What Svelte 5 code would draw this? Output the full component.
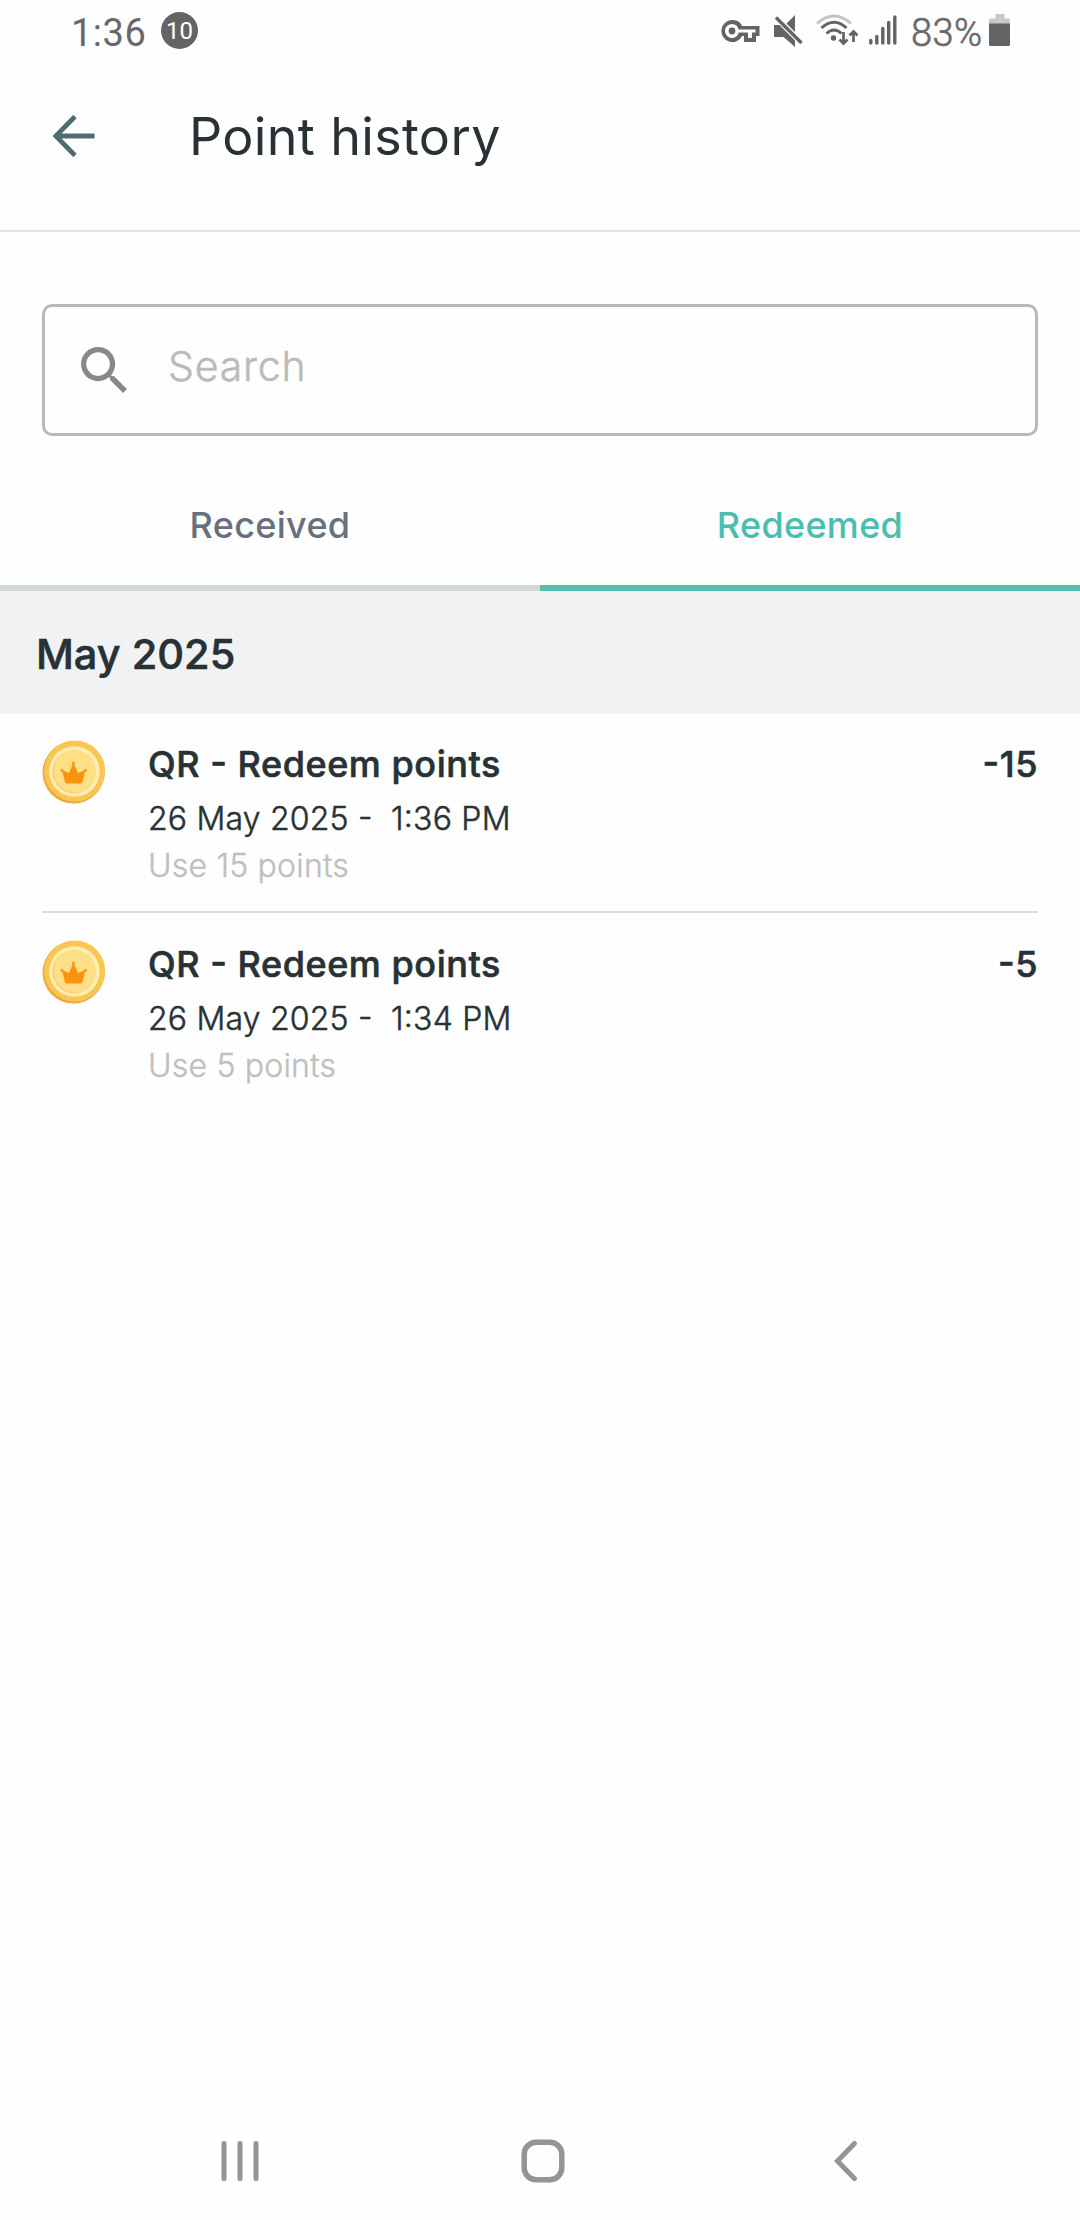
<script>
  const tabs = ['Received', 'Redeemed'];
  let active = $state('Redeemed');
  const entries = [
    { title: 'QR - Redeem points', date: '26 May 2025 -  1:36 PM', note: 'Use 15 points', amount: '-15' },
    { title: 'QR - Redeem points', date: '26 May 2025 -  1:34 PM', note: 'Use 5 points', amount: '-5' }
  ];
</script>

{#snippet coin()}
  <svg class="coin" viewBox="0 0 64 64" aria-hidden="true">
    <circle cx="31.5" cy="32.5" r="31" fill="#e9ab40" />
    <circle cx="32.7" cy="31" r="30.5" fill="#f9c653" />
    <circle cx="32.500" cy="31.500" r="25.3" fill="#ffedae" />
    <circle cx="32" cy="31.800" r="21.5" fill="#f3cf78" />
    <circle cx="33" cy="31.300" r="21" fill="#fedf86" />
    <path d="M20 30l7 3L31.500 22.500 36 33l7.500-3-3 12q-.3 1.500-2 1.500H25q-1.700 0-2-1.500z" fill="#f9920f" />
    <circle cx="20" cy="30.500" r="1.400" fill="#f9920f" />
    <circle cx="43.500" cy="30.500" r="1.400" fill="#f9920f" />
    <circle cx="31.500" cy="23" r="1.500" fill="#f9920f" />
  </svg>
{/snippet}

<div class="screen">
  <div class="status">
    <div class="left">
      <span class="clock">1:36</span>
      <span class="badge">10</span>
    </div>
    <div class="right">
      <svg class="key" width="39" height="24" viewBox="0 0 39 24">
        <path fill="#646464" fill-rule="evenodd" d="M11 0a11 11 0 0 1 10.200 6H38.500v10H35v6H23v-6h-1.800A11 11 0 1 1 11 0zM11 4a7 7 0 1 0 6.800 8.500H27V18h4v-5.500h3.500V9.500H17.600A7 7 0 0 0 11 4z" />
        <circle cx="11" cy="11" r="3.400" fill="#646464" />
      </svg>
      <svg class="mute" width="30" height="32" viewBox="0 0 30 32">
        <path fill="#646464" d="M0 10h5.500L21 25.500V32L9.500 22H0zM21 0v17L12.500 8.500z" />
        <path d="M2 2.500L27.500 28" stroke="#646464" stroke-width="3.400" />
      </svg>
      <svg class="wifi" width="42" height="34" viewBox="0 0 42 34" fill="none" stroke-width="3">
        <path d="M1 9.500Q18-5.500 35 9.500" stroke="#c4c4c4" />
        <path d="M5.500 14Q18 2.500 30.500 14M10.500 19.500Q18 12.500 25.500 19.500" stroke="#646464" />
        <circle cx="17.500" cy="24" r="2.700" fill="#646464" />
        <path d="M27.500 18v11M23.500 25.500l4 4 4-4M37.500 28V18M33.500 21.500l4-4 4 4" stroke="#646464" stroke-width="2.700" />
      </svg>
      <svg class="signal" width="28" height="30" viewBox="0 0 28 30" stroke="#646464" stroke-width="3.400" stroke-linecap="round">
        <path d="M1.800 25.500V28M7.800 21.500V28M13.800 13.500V28M19.700 7.500V28M25.800 2V28" />
      </svg>
      <span class="percent">83%</span>
      <svg class="battery" width="22" height="33" viewBox="0 0 22 33">
        <path fill="#c8c8c8" d="M6.500 0h9v4.500H20a1 1 0 0 1 1 1V12H0V5.500a1 1 0 0 1 1-1h5.500z" />
        <path fill="#646464" d="M0 9.500h21V30.500q0 1.500-1.500 1.500h-18Q0 32 0 30.500z" />
      </svg>
    </div>
  </div>

  <header>
    <button class="back" aria-label="Back">
      <svg width="42" height="42" viewBox="0 0 42 42" fill="none" stroke="#4f6c72" stroke-width="4.800">
        <path d="M22 1.500L2.800 21 22 40.500M3.500 21H41.500" />
      </svg>
    </button>
    <h1>Point history</h1>
  </header>

  <div class="search">
    <svg width="46" height="46" viewBox="3 3 17.5 17.5" fill="#888">
      <path d="M15.500 14h-.79l-.28-.27A6.471 6.471 0 0 0 16 9.500 6.500 6.500 0 1 0 9.500 16c1.610 0 3.090-.59 4.230-1.570l.27.28v.79l5 4.990L20.490 19l-4.990-5zm-6 0C7.010 14 5 11.990 5 9.500S7.010 5 9.500 5 14 7.010 14 9.500 11.990 14 9.500 14z" />
    </svg>
    <span>Search</span>
  </div>

  <div class="tabs">
    {#each tabs as tab}
      <button class="tab" class:active={tab === active} onclick={() => (active = tab)}>{tab}</button>
    {/each}
  </div>

  <h2>May 2025</h2>

  <ul>
    {#each entries as entry}
      <li>
        {@render coin()}
        <div class="info">
          <div class="title">{entry.title}</div>
          <div class="date">{entry.date}</div>
          <div class="note">{entry.note}</div>
        </div>
        <div class="amount">{entry.amount}</div>
      </li>
    {/each}
  </ul>

  <nav>
    <svg width="42" height="44" viewBox="0 0 42 44" stroke="#949494" stroke-width="5" stroke-linecap="round">
      <path d="M5 4.500V39.500M21 4.500V39.500M37 4.500V39.500" />
    </svg>
    <svg width="44" height="44" viewBox="0 0 44 44" fill="none" stroke="#949494" stroke-width="5.500">
      <rect x="3.200" y="3.200" width="37.600" height="37.600" rx="12" />
    </svg>
    <svg width="42" height="44" viewBox="0 0 42 44" fill="none" stroke="#949494" stroke-width="5" stroke-linecap="round">
      <path d="M30.500 4.500L13.500 22l17 17.500" />
    </svg>
  </nav>
</div>

<style>
  :global(body) {
    background: #fefefe;
  }
  .screen {
    width: 1080px;
    min-height: 2220px;
    display: flex;
    flex-direction: column;
    font-family: Inter, sans-serif;
    color: #283134;
    background: #fefefe;
  }
  svg {
    display: block;
    flex: none;
  }
  button {
    border: 0;
    padding: 0;
    background: none;
    font: inherit;
  }
  .status {
    height: 66px;
    display: flex;
    justify-content: space-between;
    padding: 0 69px 0 71px;
    font: 400 38px/66px Roboto, sans-serif;
    color: #686868;
  }
  .left,
  .right {
    display: flex;
    align-items: flex-start;
  }
  .clock {
    letter-spacing: 0.5px;
    width: 90px;
  }
  .badge {
    width: 37px;
    height: 37px;
    margin-top: 12px;
    border-radius: 50%;
    background: #646464;
    color: #fff;
    font-size: 24px;
    line-height: 38px;
    text-align: center;
  }
  .key {
    margin: 20px 14px 0 0;
  }
  .mute {
    margin: 15px 12px 0 0;
  }
  .wifi {
    margin: 14px 11px 0 0;
  }
  .signal {
    margin: 15px 14px 0 0;
  }
  .percent {
    width: 78px;
    font-weight: 300;
    letter-spacing: 0.4px;
    -webkit-text-stroke: 0.6px currentColor;
  }
  .battery {
    margin-top: 14px;
  }
  header {
    height: 140px;
    padding: 0 53px 24px;
    display: flex;
    align-items: center;
    border-bottom: 2px solid #e2e4e4;
  }
  .back {
    width: 136px;
  }
  h1 {
    margin: 0;
    font-size: 52px;
    font-weight: 400;
    letter-spacing: 0.35px;
  }
  .search {
    height: 132px;
    box-sizing: border-box;
    margin: 72px 42px 0;
    border: 3px solid #b8baba;
    border-radius: 10px;
    display: flex;
    align-items: center;
    gap: 41px;
    padding: 0 36px;
  }
  .search svg {
    margin-bottom: 1px;
  }
  .search span {
    padding-bottom: 9px;
    font-size: 41px;
    font-weight: 300;
    letter-spacing: 0.800px;
    color: #bababa;
    -webkit-text-stroke: 0.5px currentColor;
  }
  .tabs {
    display: flex;
  }
  .tab {
    flex: 1;
    height: 155px;
    box-sizing: border-box;
    padding: 29px 0 0;
    line-height: 120px;
    border-bottom: 6px solid #d1d6d6;
    font-size: 36px;
    font-weight: 500;
    letter-spacing: 0.3px;
    color: #68707e;
    display: flex;
    align-items: flex-start;
    justify-content: center;
  }
  .tab.active {
    color: #4bbdb0;
    border-color: #57bdae;
  }
  h2 {
    margin: 0;
    height: 123px;
    padding-left: 36px;
    background: #f0f2f4;
    font-size: 41.500px;
    font-weight: 500;
    line-height: 127px;
    letter-spacing: 0;
    -webkit-text-stroke: 0.6px currentColor;
  }
  ul {
    margin: 0;
    padding: 0 42px;
    list-style: none;
    font-feature-settings: 'case';
  }
  li {
    display: flex;
    padding: 23px 0 26px;
    margin-bottom: 1px;
    border-bottom: 2px solid #dcdddd;
  }
  li:last-child {
    border-color: transparent;
  }
  .coin {
    width: 64px;
    height: 64px;
    margin: 3px 42px 0 0;
  }
  .info {
    flex: 1;
  }
  .title,
  .amount {
    font-size: 36px;
    font-weight: 500;
    line-height: 54px;
    letter-spacing: 0.550px;
    -webkit-text-stroke: 0.6px currentColor;
  }
  .date {
    white-space: pre;
    font-size: 32px;
    font-weight: 300;
    line-height: 55px;
    letter-spacing: 0.200px;
    -webkit-text-stroke: 0.5px currentColor;
  }
  .note {
    font-size: 32px;
    font-weight: 300;
    line-height: 39px;
    letter-spacing: 0.200px;
    color: #bfbfbf;
    -webkit-text-stroke: 0.4px currentColor;
  }
  nav {
    margin-top: auto;
    height: 119px;
    padding: 0 214px 0 219px;
    display: flex;
    align-items: center;
    justify-content: space-between;
  }
</style>
